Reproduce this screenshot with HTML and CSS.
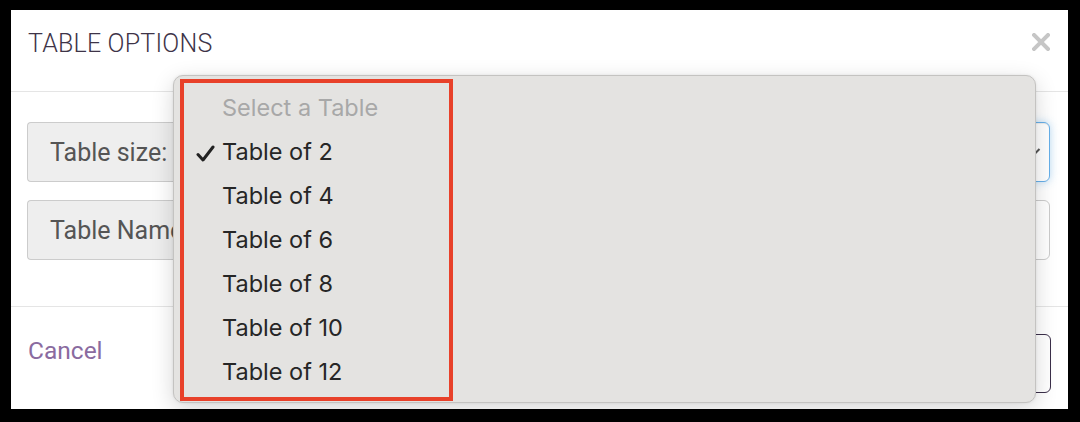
FILE: index.html
```
<!DOCTYPE html>
<html lang="en">
<head>
    <meta charset="UTF-8">
    <title>Table Options</title>
    <link rel="stylesheet" href="styles.css">
</head>
<body>
    <div class="frame">
        <div class="modal">
            <div class="modal-header">
                <h4 class="modal-title">TABLE OPTIONS</h4>
                <svg class="close" width="18" height="18" viewBox="0 0 18 18">
                    <path d="M2 2 L16 16 M16 2 L2 16" stroke="#c6c6c6" stroke-width="4" stroke-linecap="square" fill="none"/>
                </svg>
            </div>

            <div class="modal-body">
                <div class="input-group">
                    <span class="addon">Table size:</span>
                    <div class="field field-focus">
                        <svg class="caret" width="14" height="10" viewBox="0 0 14 10">
                            <path d="M1.5 2 L7 7.5 L12.5 2" stroke="#555" stroke-width="2" fill="none"/>
                        </svg>
                    </div>
                </div>
                <div class="input-group">
                    <span class="addon">Table Name:</span>
                    <div class="field"></div>
                </div>
            </div>

            <div class="modal-footer">
                <a class="cancel">Cancel</a>
                <button class="btn-save">Save</button>
            </div>
        </div>
    </div>

    <!-- native select menu, opened -->
    <div class="select-menu">
        <div class="option placeholder">Select a Table</div>
        <div class="option selected">
            <svg class="check" width="19" height="17" viewBox="0 0 19 17">
                <path d="M2 9.5 L7 15 L17 2" stroke="#222" stroke-width="3" stroke-linecap="round" stroke-linejoin="round" fill="none"/>
            </svg>
            Table of 2
        </div>
        <div class="option">Table of 4</div>
        <div class="option">Table of 6</div>
        <div class="option">Table of 8</div>
        <div class="option">Table of 10</div>
        <div class="option">Table of 12</div>
    </div>
    <div class="highlight"></div>
</body>
</html>
```

FILE: styles.css
```
body {
    margin: 0;
    background: #000;
    height: 422px;
    overflow: hidden;
    font-family: 'Roboto', 'Liberation Sans', sans-serif;
}

.frame {
    padding: 10px 12px 0 11px;
}

.modal {
    background: #fff;
    height: 399px;
    display: flex;
    flex-direction: column;
}

.modal-header {
    height: 62px;
    padding: 19px 18px 0 17px;
    border-bottom: 1px solid #e5e5e5;
    display: flex;
    justify-content: space-between;
    align-items: flex-start;
}

.modal-title {
    margin: 0;
    font-size: 25px;
    line-height: 30px;
    font-weight: 300;
    color: #3e3448;
    letter-spacing: 0.2px;
}

.close {
    margin-top: 4px;
}

.modal-body {
    padding: 30px 18px 0 16px;
    height: 184px;
    border-bottom: 1px solid #e5e5e5;
    display: flex;
    flex-direction: column;
    gap: 18px;
}

.input-group {
    display: flex;
    height: 60px;
}

.addon {
    display: flex;
    align-items: center;
    padding: 0 22px;
    background: #eee;
    border: 1px solid #ccc;
    border-right: none;
    border-radius: 4px 0 0 4px;
    font-size: 25px;
    color: #555;
}

.field {
    flex: 1;
    border: 1px solid #ccc;
    border-radius: 0 6px 6px 0;
    display: flex;
    align-items: center;
    justify-content: flex-end;
    padding-right: 8px;
}

.field-focus {
    border-color: #66afe9;
    box-shadow: inset 0 1px 1px rgba(0,0,0,.075), 0 0 8px rgba(102,175,233,.45);
}

.modal-footer {
    flex: 1;
    padding: 27px 17px 0 17px;
    display: flex;
    justify-content: space-between;
    align-items: flex-start;
}

.cancel {
    margin-top: 2px;
    font-size: 24.5px;
    line-height: 30px;
    color: #8a6b9f;
}

.btn-save {
    width: 160px;
    height: 59px;
    background: #fff;
    border: 1.5px solid #3b2f4a;
    border-radius: 6px;
    font-family: inherit;
    font-size: 24px;
    color: #3b2f4a;
}

/* the opened dropdown sits above the modal */
.select-menu {
    position: absolute;
    left: 173px;
    top: 75px;
    width: 863px;
    height: 328px;
    padding-top: 10px;
    box-sizing: border-box;
    background: #e4e3e1;
    border: 1px solid #c4c3c1;
    border-radius: 10px;
    box-shadow: 0 6px 22px rgba(0,0,0,.16), 0 0 3px rgba(0,0,0,.08);
    font-family: 'Inter', 'Roboto', sans-serif;
}

.option {
    position: relative;
    height: 44px;
    line-height: 44px;
    padding-left: 48px;
    font-size: 23.5px;
    color: #262626;
}

.option.placeholder {
    color: #a8a8a8;
}

.check {
    position: absolute;
    left: 22px;
    top: 15px;
}

.highlight {
    position: absolute;
    left: 180px;
    top: 79px;
    width: 273px;
    height: 322px;
    box-sizing: border-box;
    border: 4px solid #e8412a;
}
```
